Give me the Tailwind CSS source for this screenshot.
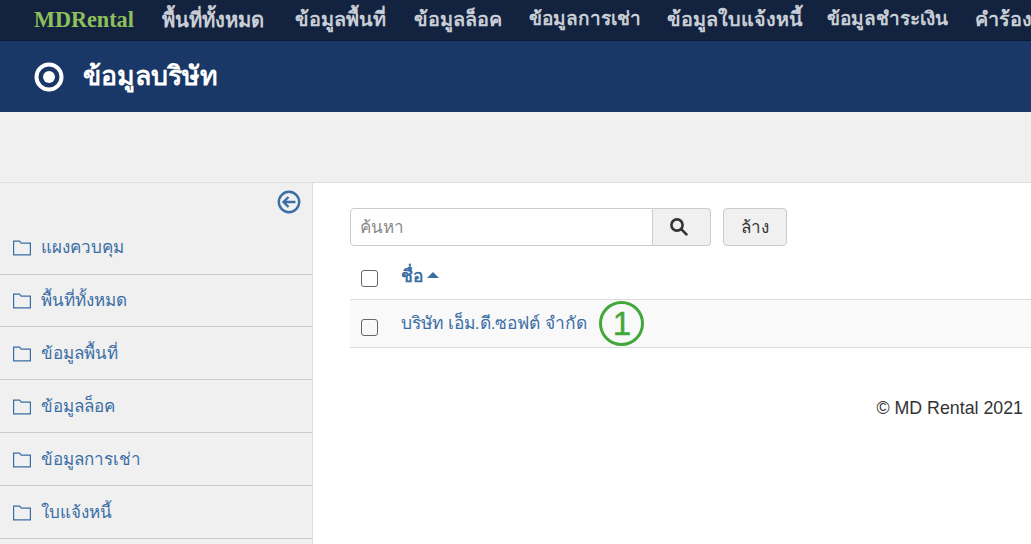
<!DOCTYPE html>
<html lang="th">
<head>
<meta charset="utf-8">
<script src="https://cdn.jsdelivr.net/npm/@tailwindcss/browser@4"></script>
<title>MDRental</title>
</head>
<body class="h-[544px] w-[1031px] overflow-hidden bg-white font-['Liberation_Sans','Noto_Sans',sans-serif] text-[17px] text-[#333]">
<nav class="flex h-[41px] items-center overflow-hidden whitespace-nowrap border-b border-[#0b1a33] bg-[#13233f] pl-[34px] text-[19.8px] font-bold text-[#c9ced6]">
  <span class="w-[128px] shrink-0 font-['Liberation_Serif',serif] text-[22.2px] text-[#8fc05a]">MDRental</span>
  <div class="flex">
    <span class="w-[133px] shrink-0 text-[20.2px]">พื้นที่ทั้งหมด</span><span class="w-[119px] shrink-0">ข้อมูลพื้นที่</span><span class="w-[115px] shrink-0">ข้อมูลล็อค</span><span class="w-[138px] shrink-0 text-[19px]">ข้อมูลการเช่า</span><span class="w-[160px] shrink-0 text-[19.8px]">ข้อมูลใบแจ้งหนี้</span><span class="w-[148px] shrink-0 text-[19px]">ข้อมูลชำระเงิน</span><span class="shrink-0">คำร้อง</span>
  </div>
</nav>
<header class="flex h-[71px] items-center gap-[19px] bg-[#1a3867] pl-[34px] text-white">
  <svg class="h-[30px] w-[30px]" viewBox="0 0 30 30" fill="none"><circle cx="15" cy="15" r="12.5" stroke="white" stroke-width="4"/><circle cx="15" cy="15" r="6" fill="white"/></svg>
  <h1 class="text-[26.7px] font-bold">ข้อมูลบริษัท</h1>
</header>
<div class="h-[71px] border-b border-[#ddd] bg-[#f0f0f0]"></div>
<div class="flex h-[361px] overflow-hidden">
  <aside class="w-[313px] shrink-0 border-r border-[#ddd] bg-[#f0f0f0] text-[#3a6ea5]">
    <div class="flex h-[38px] items-center justify-end pr-[11px]">
      <svg class="h-[24px] w-[24px]" viewBox="0 0 24 24" fill="none" stroke="#3a6ea5" stroke-width="2.4"><circle cx="12" cy="12" r="10.2"/><path d="M18.5 12H7M11.5 7 6.5 12l5 5"/></svg>
    </div>
    <ul>
      <li class="flex h-[54px] items-center gap-[10px] border-b border-[#ccc] pl-[13px]"><svg class="h-[16px] w-[18px]" viewBox="0 0 18 16" fill="none" stroke="#3a6ea5" stroke-width="1.2"><path d="M.6 1.2h6l1.6 2h9.2v11.6H.6z"/></svg>แผงควบคุม</li>
      <li class="flex h-[52px] items-center gap-[10px] border-b border-[#ccc] pl-[13px]"><svg class="h-[16px] w-[18px]" viewBox="0 0 18 16" fill="none" stroke="#3a6ea5" stroke-width="1.2"><path d="M.6 1.2h6l1.6 2h9.2v11.6H.6z"/></svg>พื้นที่ทั้งหมด</li>
      <li class="flex h-[53px] items-center gap-[10px] border-b border-[#ccc] pl-[13px] pt-[2px]"><svg class="h-[16px] w-[18px]" viewBox="0 0 18 16" fill="none" stroke="#3a6ea5" stroke-width="1.2"><path d="M.6 1.2h6l1.6 2h9.2v11.6H.6z"/></svg>ข้อมูลพื้นที่</li>
      <li class="flex h-[53px] items-center gap-[10px] border-b border-[#ccc] pl-[13px] pt-[2px]"><svg class="h-[16px] w-[18px]" viewBox="0 0 18 16" fill="none" stroke="#3a6ea5" stroke-width="1.2"><path d="M.6 1.2h6l1.6 2h9.2v11.6H.6z"/></svg>ข้อมูลล็อค</li>
      <li class="flex h-[53px] items-center gap-[10px] border-b border-[#ccc] pl-[13px] pt-[2px]"><svg class="h-[16px] w-[18px]" viewBox="0 0 18 16" fill="none" stroke="#3a6ea5" stroke-width="1.2"><path d="M.6 1.2h6l1.6 2h9.2v11.6H.6z"/></svg>ข้อมูลการเช่า</li>
      <li class="flex h-[53px] items-center gap-[10px] border-b border-[#ccc] pl-[13px] pt-[2px]"><svg class="h-[16px] w-[18px]" viewBox="0 0 18 16" fill="none" stroke="#3a6ea5" stroke-width="1.2"><path d="M.6 1.2h6l1.6 2h9.2v11.6H.6z"/></svg>ใบแจ้งหนี้</li>
    </ul>
  </aside>
  <main class="min-w-0 flex-1 pl-[37px] pt-[25px]">
    <div class="flex h-[38px] gap-[12px]">
      <div class="flex">
        <div class="flex w-[303px] items-center rounded-l-[4px] border border-[#ccc] pl-[9px] pt-[2px] text-[#8a8a8a]">ค้นหา</div>
        <div class="flex w-[58px] items-center justify-center rounded-r-[4px] border border-l-0 border-[#ccc] bg-[#f0f0f0] pr-[5px]"><svg class="h-[20px] w-[20px]" viewBox="0 0 20 20" fill="none" stroke="#333" stroke-width="2.6"><circle cx="8" cy="8" r="5.6"/><path d="m12.2 12.2 6 6"/></svg></div>
      </div>
      <div class="flex w-[64px] items-center justify-center rounded-[4px] border border-[#ccc] bg-[#f0f0f0] pt-[2px]">ล้าง</div>
    </div>
    <div class="flex h-[54px] items-center border-b border-[#ddd] pl-[11px]">
      <span class="mt-[12px] h-[17px] w-[17px] rounded-[3px] border border-[#666]"></span>
      <span class="ml-[23px] mt-[8px] flex items-center gap-[4px] text-[17.4px] font-bold text-[#3a6ea5]">ชื่อ<span class="mb-[3px] border-x-[6px] border-b-[6px] border-x-transparent border-b-[#3a6ea5]"></span></span>
    </div>
    <div class="flex h-[48px] items-center border-b border-[#ddd] bg-[#f9f9f9] pl-[11px]">
      <span class="mt-[7px] h-[17px] w-[17px] rounded-[3px] border border-[#666]"></span>
      <span class="ml-[23px] text-[17.4px] text-[#3a6ea5]">บริษัท เอ็ม.ดี.ซอฟต์ จำกัด</span>
      <span class="ml-[12px] flex h-[45px] w-[45px] items-center justify-center rounded-full border-[3px] border-[#43a83c] text-[33px] leading-none text-[#43a83c] [-webkit-text-stroke:0.4px_#43a83c]">1</span>
    </div>
    <p class="mt-[47px] pr-[8px] text-right text-[17.8px]">© MD Rental 2021</p>
  </main>
</div>
</body>
</html>
